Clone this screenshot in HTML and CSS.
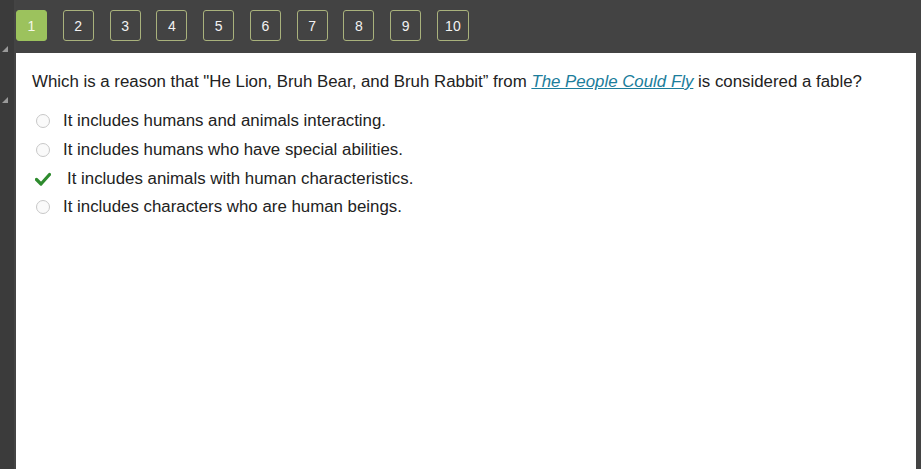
FILE: index.html
```html
<!DOCTYPE html>
<html>
<head>
<meta charset="utf-8">
<link rel="stylesheet" href="styles.css">
</head>
<body>
<div class="page">
  <div class="side">
    <span class="tri tri1"></span>
    <span class="tri tri2"></span>
  </div>
  <div class="main">
    <div class="nav">
      <span class="num active">1</span>
      <span class="num">2</span>
      <span class="num">3</span>
      <span class="num">4</span>
      <span class="num">5</span>
      <span class="num">6</span>
      <span class="num">7</span>
      <span class="num">8</span>
      <span class="num">9</span>
      <span class="num wide">10</span>
    </div>
    <div class="panel">
      <p class="question">Which is a reason that "He Lion, Bruh Bear, and Bruh Rabbit” from <a class="title">The People Could Fly</a> is considered a fable?</p>
      <ul class="options">
        <li class="opt"><span class="radio"></span><span class="label">It includes humans and animals interacting.</span></li>
        <li class="opt"><span class="radio"></span><span class="label">It includes humans who have special abilities.</span></li>
        <li class="opt correct"><svg class="check" width="16" height="14" viewBox="0 0 16 14"><path d="M1.5 7.5 L6 12 L14.5 2.5" fill="none" stroke="#2e8b2e" stroke-width="3.2" stroke-linecap="round" stroke-linejoin="round"/></svg><span class="label">It includes animals with human characteristics.</span></li>
        <li class="opt"><span class="radio"></span><span class="label">It includes characters who are human beings.</span></li>
      </ul>
    </div>
  </div>
  <div class="rside"></div>
</div>
</body>
</html>
```

FILE: styles.css
```css
html, body {
  margin: 0;
  padding: 0;
  height: 100%;
}
body {
  background: #434343;
  font-family: "Liberation Sans", Arial, sans-serif;
  overflow: hidden;
}
.page {
  display: flex;
  height: 469px;
}
.side {
  width: 14px;
  flex: none;
  background: #3b3b3b;
  border-right: 2px solid #444;
  position: relative;
}
.tri {
  position: absolute;
  left: 2px;
  width: 0;
  height: 0;
  border-left: 6px solid transparent;
  border-bottom: 6px solid #9a9a9a;
}
.tri1 { top: 46px; }
.tri2 { top: 97px; }
.main {
  flex: 1;
  display: flex;
  flex-direction: column;
}
.nav {
  height: 53px;
  display: flex;
  align-items: flex-start;
  padding-top: 10px;
  box-sizing: border-box;
  gap: 15.78px;
  background: #434343;
}
.num {
  width: 29px;
  height: 29px;
  border: 1px solid #a9b27c;
  border-radius: 3px;
  color: #f2f2f2;
  font-size: 14px;
  display: flex;
  align-items: center;
  justify-content: center;
}
.num.wide { width: 30px; }
.num.active {
  background: #9cc25d;
  border-color: #9cc25d;
  color: #f4f8ea;
}
.panel {
  flex: 1;
  background: #ffffff;
  padding: 0 16px;
}
.question {
  margin: 19px 0 0 0;
  font-size: 16.85px;
  line-height: 20px;
  color: #222;
}
.title {
  color: #1b7d9b;
  font-style: italic;
  text-decoration: underline;
}
.options {
  list-style: none;
  margin: 14px 0 0 0;
  padding: 0;
}
.opt {
  display: flex;
  align-items: center;
  height: 29px;
  font-size: 16.85px;
  color: #222;
}
.opt:nth-child(4) { height: 27px; }
.radio {
  width: 12px;
  height: 12px;
  border: 1px solid #c8c8c8;
  border-radius: 50%;
  background: #fafafa;
  margin-left: 4px;
  margin-right: 13px;
}
.check {
  margin-left: 3px;
  margin-right: 16px;
}
.rside {
  width: 5px;
  flex: none;
  background: #434343;
}
```
